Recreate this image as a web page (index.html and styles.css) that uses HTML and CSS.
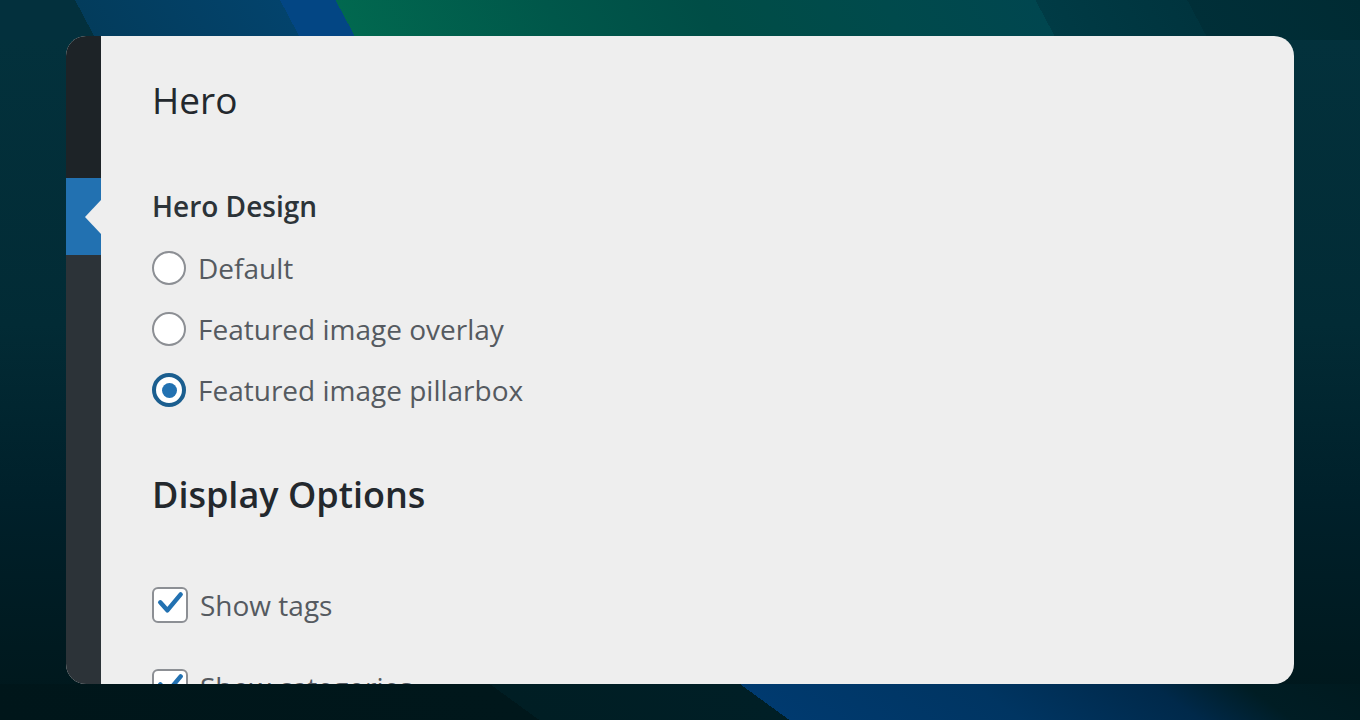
FILE: index.html
```html
<!DOCTYPE html>
<html lang="en">
<head>
<meta charset="UTF-8">
<title>Post settings</title>
<meta name="viewport" content="width=device-width,initial-scale=1" />
<link rel="stylesheet" href="styles.css">
</head>
<body>

  <div class="panel">

    <div class="sidebar">
      <div class="sidebar-top"></div>
      <div class="sidebar-current"><span class="notch"></span></div>
      <div class="sidebar-rest"></div>
    </div>

    <div class="settings">

      <h1 class="title">Hero</h1>

      <div class="field">
        <h2 class="field-label">Hero Design</h2>
        <label class="option"><span class="radio"></span>Default</label>
        <label class="option"><span class="radio"></span>Featured image overlay</label>
        <label class="option"><span class="radio checked"></span>Featured image pillarbox</label>
      </div>

      <h1 class="section-title">Display Options</h1>

      <div class="field checks">
        <label class="option">
          <span class="checkbox">
            <svg viewBox="0 0 36 36" width="32" height="32"><polyline points="7,15 15,24 30,6"/></svg>
          </span>Show tags
        </label>
        <label class="option">
          <span class="checkbox">
            <svg viewBox="0 0 36 36" width="32" height="32"><polyline points="7,15 15,24 30,6"/></svg>
          </span>Show categories
        </label>
      </div>

    </div>
  </div>

</body>
</html>
```

FILE: styles.css
```css
html {
  height: 100%;
}
body {
  margin: 0;
  height: 100%;
  font-family: "Open Sans", "Noto Sans", sans-serif;
  background-color: #012a33;
  background-image:
    linear-gradient(62deg, #03303d 0px, #03303d 85px, #033c5c 85px, #03436c 266px, #034684 266px, #034684 315px, #01684f 315px, #00574a 500px, #004d46 637px, #004a4c 799px, #00464f 933px, #003b45 933px, #00343e 1067px, #002f38 1067px, #002b33 1220px),
    linear-gradient(36deg, #00161a 0px, #00171b 317px, #001e24 317px, #001f26 464px, #003a6f 464px, #003562 600px, #00294a 705px, #001d24 760px, #001a1f 828px),
    linear-gradient(180deg, #03323d 0%, #022b35 45%, #00202a 70%, #00171b 100%);
  background-size: 100% 40px, 100% 36px, 100% 100%;
  background-position: top left, bottom left, top left;
  background-repeat: no-repeat;
  padding: 36px 66px;
  box-sizing: border-box;
}

.panel {
  display: flex;
  height: 648px;
  background: #eeeeee;
  border-radius: 20px;
  overflow: hidden;
}

.sidebar {
  width: 35px;
  display: flex;
  flex-direction: column;
  flex-shrink: 0;
}
.sidebar-top {
  height: 142px;
  background: #1d2327;
}
.sidebar-current {
  height: 77px;
  background: #2271b1;
  display: flex;
  align-items: center;
  justify-content: flex-end;
}
.notch {
  width: 0;
  height: 0;
  border-top: 17px solid transparent;
  border-bottom: 17px solid transparent;
  border-right: 16px solid #eeeeee;
}
.sidebar-rest {
  flex: 1;
  background: #2c3338;
}

.settings {
  flex: 1;
  padding: 40px 0 0 51px;
  color: #23282d;
}

.title {
  margin: 0;
  font-size: 37px;
  line-height: 48px;
  font-weight: 500;
}

.field {
  display: flex;
  flex-direction: column;
  gap: 21px;
}
.field-label {
  margin: 66px 0 5px;
  font-size: 28px;
  line-height: 32px;
  font-weight: 600;
  color: #2c3338;
}

.option {
  display: flex;
  align-items: center;
  gap: 12px;
  height: 40px;
  font-size: 28px;
  color: #555a60;
}

.radio {
  width: 34px;
  height: 34px;
  box-sizing: border-box;
  border: 2px solid #8c8f94;
  border-radius: 50%;
  background: #fff;
  display: flex;
  align-items: center;
  justify-content: center;
}
.radio.checked {
  border: 4px solid #1b5e8f;
}
.radio.checked::after {
  content: "";
  width: 15px;
  height: 15px;
  border-radius: 50%;
  background: #2271b1;
}

.section-title {
  margin: 63px 0 0;
  font-size: 36px;
  line-height: 44px;
  font-weight: 600;
}

.checks {
  margin-top: 68px;
  gap: 42px;
}
.checkbox {
  width: 36px;
  height: 36px;
  box-sizing: border-box;
  border: 2px solid #8c8f94;
  border-radius: 6px;
  background: #fff;
  display: flex;
  align-items: center;
  justify-content: center;
}
.checkbox svg {
  fill: none;
  stroke: #2271b1;
  stroke-width: 5;
  stroke-linecap: round;
  stroke-linejoin: round;
}
```
